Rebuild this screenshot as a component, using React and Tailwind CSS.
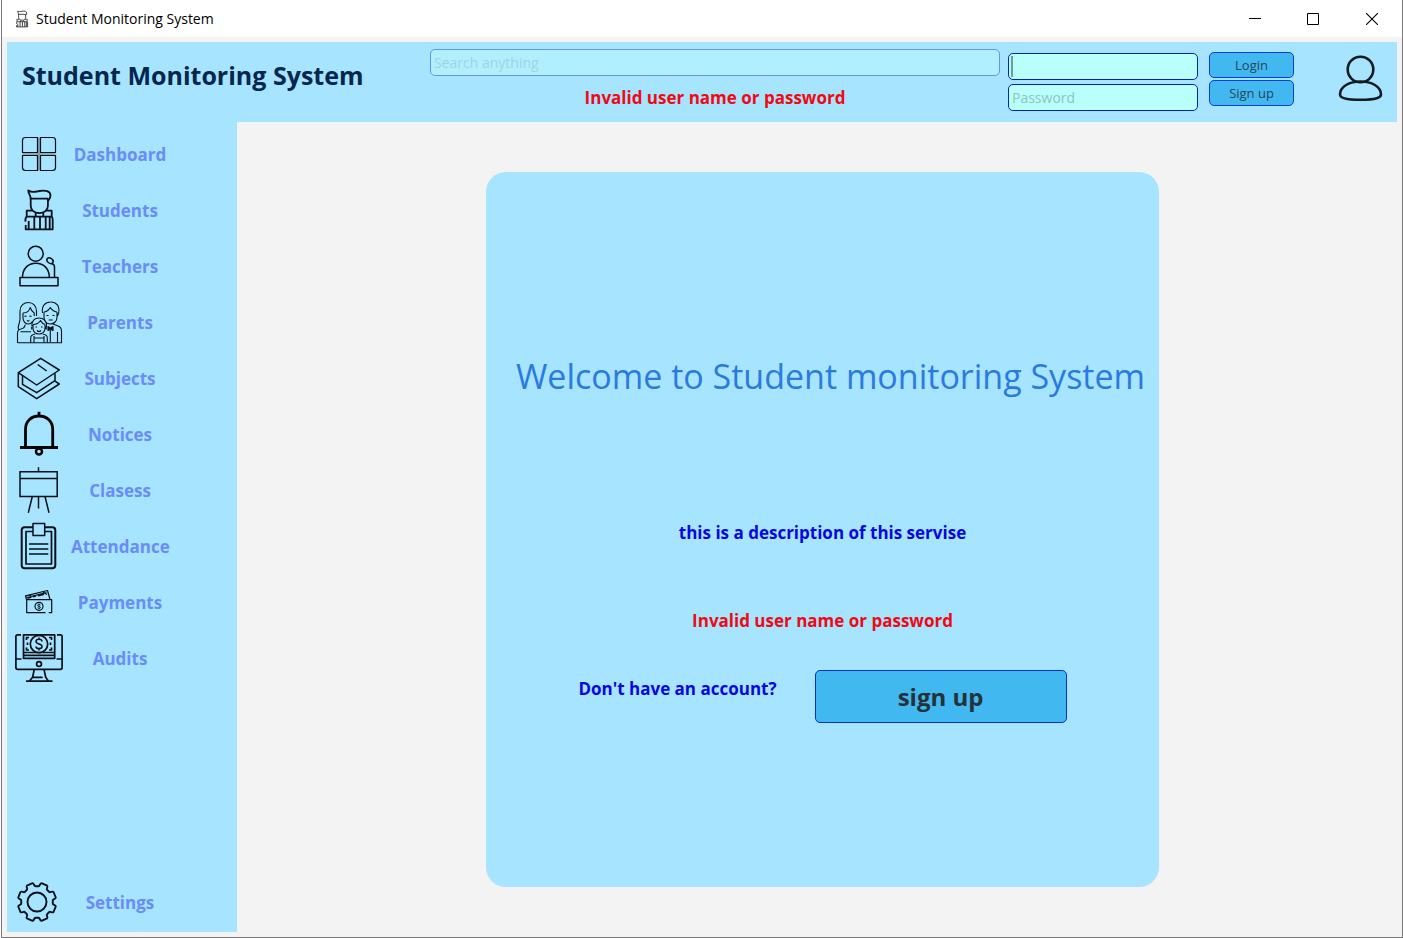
import React from "react";

const line = {
  width: 48,
  height: 48,
  viewBox: "0 0 48 48",
  fill: "none",
  stroke: "#06101a",
  strokeWidth: 1.5,
  strokeLinejoin: "round",
  "aria-hidden": true,
};

function StudentShape() {
  return (
    <>
      <path d="M15.700 13C16 9.500 13.200 8 13.300 4.500c3 2.500 7 1.200 11 .5 6-1 11.200 0 11.200 4.500 0 2-.8 3.500-2.300 5.500" />
      <path d="M15.700 12.600h17.200v7.500c0 4-3.600 7-8.600 7s-8.600-3-8.600-7z" />
      <path d="M17.500 24.700h-5.800v6h25v-6H31M20.700 27v3.700M28.300 27v3.700" />
      <path d="M11.700 30.700c-1.200 1-1.500 3-1.200 5M10.700 39v4.300h27V33.500c0-1.500-.4-2.300-1.200-2.800M13.700 35v8.300M19.300 31v12.300M25 31v12.300M30.700 31v12.300M34.700 31v12.300" />
    </>
  );
}

function DashboardIcon() {
  return (
    <svg {...line}>
      <path d="M24 7.500v33M7.500 24h33" stroke="#7d96a3" strokeWidth="1.600" />
      <path d="M22.500 7.500v15h-15V10.500q0-3 3-3zM25.500 7.500v15h15V10.500q0-3-3-3zM22.500 40.500v-15h-15v12q0 3 3 3zM25.500 40.500v-15h15v12q0 3-3 3z" strokeWidth="1.200" />
    </svg>
  );
}

function StudentsIcon() {
  return (
    <svg {...line} strokeWidth="1.800">
      <StudentShape />
    </svg>
  );
}

function TeachersIcon() {
  return (
    <svg {...line}>
      <circle cx="20.700" cy="11.700" r="7.500" />
      <path d="M7.500 35.300c0-8.500 5.500-14 13.400-14s13.400 5.500 13.400 14M5 35.500h38v8.200H5z" />
      <ellipse cx="35" cy="18.700" rx="3.400" ry="2.500" transform="rotate(35 35 18.700)" />
      <path d="M36.500 21.500c2 .5 3 1.500 3 3.500v10.500" />
    </svg>
  );
}

function ParentsIcon() {
  return (
    <svg {...line} strokeWidth="1.100">
      <path d="M4 32c-2.500-3 1-6 1-11v-8C5 7.500 9 4.500 13.500 4.500S21.500 8 21.500 13v5" />
      <path d="M8 15v5c0 3 2 6 5.200 6 2 0 3.300-1 4.200-2.500M8 15c4 0 6.500-2.500 7.200-5.500 1 3 2.500 4.500 4 5.500v3M4 31.500c3.500-.5 6-2 6.200-5" />
      <path d="M9.500 18.500q1-1 2 0M14.500 18.500q1-1 2 0M12 22.500q1 1 2.400 0" />
      <path d="M2.500 44.700V35c0-2 .5-3 2-3.500M5.500 33.700H16M2.500 44.700H46.500V33c0-3-1.500-4.500-4-5.200L38 26M42.500 34v10.700" />
      <path d="M27.500 15c-1-7 2.500-11 8-11 5.500-.5 9.500 4 8.200 11l-1.200 3M29 14c3-.5 5-2 6.300-4.500 1.500 2.500 3.500 4 6.700 4.500M29 14v5c0 4 2.500 7 6.300 7 4 0 6.700-3 6.700-7v-5" />
      <path d="M31.500 17.500h2M37.500 17.500h2M33.700 22h4" />
      <path d="M17 28c-.5-5 2.500-8 7-8s8 3 7.500 8l-1 3M18 26.500c3 0 6-1.500 7.500-4 1 2 2.500 3.500 4.700 4M18 27v3c0 3.500 2.500 6 6 6s6-2.500 6-6v-3M16.700 28.500v3M31.300 28.500v3" />
      <path d="M20.500 29h1.500M26 29h1.500M22 32.500q2 2 4 0M15.700 44.700v-5c0-2 2-3.200 4.500-3.700M32.300 44.700v-5c0-2-2-3.200-4.500-3.700M19 38v6.500M29 38v6.500M19 40h10" />
      <path d="M33 28.500l2.300 1.500 2.700-1.500v4L35.300 31 33 32.500zM35.300 32v12" fill="#06101a" />
    </svg>
  );
}

function SubjectsIcon() {
  return (
    <svg {...line}>
      <path d="M25.700 4.300L44.300 16 21.700 31 3.300 18.700zM22.700 10.500l9 6.500M3.300 18.700v14l18.400 12L44.300 30 40 27.200" />
      <path d="M7.500 21.500v8.800l14.200 8.400L40 26.700v-7.500" />
    </svg>
  );
}

function NoticesIcon() {
  return (
    <svg {...line} stroke="#000000" strokeWidth="2.800" strokeLinejoin="miter">
      <path d="M10.500 37.500V19.500C10.500 11.500 16 6 24 6s13.700 5.500 13.700 13.500v18M5 37.500h38M24 1.700V6" />
      <circle cx="24" cy="41.500" r="3" strokeWidth="2.500" />
    </svg>
  );
}

function ClassesIcon() {
  return (
    <svg {...line} strokeLinejoin="miter">
      <path d="M5 5.700h37.200v24.800H5zM5 12.500h37.200M23.500 1.300v4.400M17.300 30.500l-4 16.200M23.500 30.500v12M30 30.500l4 16.200" />
    </svg>
  );
}

function AttendanceIcon() {
  return (
    <svg {...line}>
      <rect x="6.700" y="5.300" width="33.600" height="41" rx="3" strokeWidth="2" />
      <rect x="11" y="9.500" width="25.500" height="32.500" strokeWidth="1.700" />
      <rect x="18" y="1.500" width="11.700" height="12" fill="#a6e4ff" />
      <path d="M14 22h19.300M14 27h19.300M14 32h19.300" strokeWidth="1.300" />
    </svg>
  );
}

function PaymentsIcon() {
  return (
    <svg {...line} strokeWidth="1.200">
      <path d="M30.500 34.700H11.700v-13h25v13h-3M11.500 21.500l-1-3.700 22-5.300 2.500 9" />
      <path d="M12.500 20.500l4-1.200M18 19l3-.8M23 17.800l6-1.500M14 17l2 1M11.500 19.500l20-4.800M28 14l4 2.500" />
      <circle cx="24" cy="28.300" r="4" />
      <path d="M25.500 27c-.5-1-3-.8-3 .4 0 1.400 3 .6 3 2 0 1.200-2.500 1.400-3 .3M24 25.500v5.600" strokeWidth=".8" />
    </svg>
  );
}

function AuditsIcon() {
  return (
    <svg {...line} strokeWidth="1.700">
      <path d="M6 .9H2.500Q.9.900.900 2.500v31q0 1.800 1.800 1.800h42.600q1.800 0 1.800-1.800v-31Q47.100.9 45.500.9H42M.9 25h5.600M41.500 25h5.600" />
      <path d="M8.500.9H39.700V24.300H8.500zM8.500 18.500h31.200M8.500 21.300h31.200" />
      <circle cx="24" cy="10" r="8.700" fill="#a6e4ff" />
      <path d="M11.500 6V3.500H14M36.500 6V3.500H34M11.500 13.500V16H14M36.500 13.500V16H34M12.500 8.500v2.500M35.500 8.500v2.500" />
      <path d="M27 7.500c0-1.400-1.200-2.200-3-2.200s-3 .8-3 2.200c0 3.200 6 1.600 6 4.900 0 1.400-1.200 2.200-3 2.200s-3-.8-3-2.200M24 3.500v2M24 14.500v2" strokeWidth="1.500" />
      <circle cx="24" cy="30" r="2.400" />
      <path d="M19.300 35.300l-1.700 8h10M29 35.300l1.700 8 2.500 3.500M17.600 43.300l-3 3.500M11 47.100h26.500" />
    </svg>
  );
}

function gearPath() {
  const at = (deg, r) => {
    const a = (deg * Math.PI) / 180;
    return `${(22 + r * Math.cos(a)).toFixed(2)} ${(24 + r * Math.sin(a)).toFixed(2)}`;
  };
  let d = "";
  for (let k = 0; k < 8; k += 1) {
    const c = 22.5 + 45 * k;
    d += `${k === 0 ? "M" : "L"}${at(c - 9, 19.3)}L${at(c + 9, 19.3)}`;
    d += `Q${at(c + 12, 19)} ${at(c + 13, 17.3)}Q${at(c + 14, 15.8)} ${at(c + 18, 15.8)}L${at(c + 27, 15.8)}Q${at(c + 31, 15.8)} ${at(c + 32, 17.3)}Q${at(c + 33, 19)} ${at(c + 36, 19.3)}`;
  }
  return `${d}Z`;
}

function SettingsIcon() {
  return (
    <svg {...line} strokeWidth="1.900">
      <path d={gearPath()} />
      <circle cx="22" cy="24" r="9.500" />
    </svg>
  );
}

const items = [
  ["Dashboard", DashboardIcon],
  ["Students", StudentsIcon],
  ["Teachers", TeachersIcon],
  ["Parents", ParentsIcon],
  ["Subjects", SubjectsIcon],
  ["Notices", NoticesIcon],
  ["Clasess", ClassesIcon],
  ["Attendance", AttendanceIcon],
  ["Payments", PaymentsIcon],
  ["Audits", AuditsIcon],
];

function NavItem({ label, Icon }) {
  return (
    <a href="#" className="flex h-14 items-center">
      <span className="flex w-16 shrink-0 justify-center">
        <Icon />
      </span>
      <span className="w-[98px] pt-0.5 text-center text-[17px] leading-6 font-bold whitespace-nowrap text-[#6a8cf8]">{label}</span>
    </a>
  );
}

function TitleBar() {
  return (
    <div className="flex h-[37px] items-center bg-white pl-3 text-black">
      <svg width="16" height="18" viewBox="8 2 32 44" fill="none" stroke="#333333" strokeWidth="2.200" aria-hidden="true">
        <StudentShape />
      </svg>
      <span className="ml-1.5 flex-1 text-sm">Student Monitoring System</span>
      <button type="button" aria-label="Minimize" className="flex h-9 w-[58px] items-center justify-center">
        <svg width="12" height="12" viewBox="0 0 12 12" stroke="#000000"><path d="M0 5.500h12" /></svg>
      </button>
      <button type="button" aria-label="Maximize" className="flex h-9 w-[58px] items-center justify-center">
        <svg width="12" height="12" viewBox="0 0 12 12" fill="none" stroke="#000000"><path d="M.5.5h11v11H.5z" /></svg>
      </button>
      <button type="button" aria-label="Close" className="flex h-9 w-[60px] items-center justify-center">
        <svg width="12" height="12" viewBox="0 0 12 12" stroke="#000000" strokeWidth="1.100"><path d="M0 0l12 12M12 0L0 12" /></svg>
      </button>
    </div>
  );
}

function Header() {
  return (
    <header className="flex h-20 bg-[#a6e4ff] pr-[14px]">
      <h1 className="w-[423px] shrink-0 pt-[17px] pl-[15px] text-[25px] leading-8 font-bold whitespace-nowrap text-[#04264f]">
        Student Monitoring System
      </h1>
      <div className="flex min-w-0 flex-1 flex-col pt-[7px]">
        <input
          type="search"
          aria-label="Search anything"
          placeholder="Search anything"
          className="h-[27px] w-full rounded-[5px] border border-[#6495ee] bg-[#b0effd] px-[3px] text-sm outline-none placeholder:text-[#a0d3e2]"
        />
        <p className="mt-[10px] text-center text-[17px] leading-6 font-bold text-[#ee0a14]">Invalid user name or password</p>
      </div>
      <form className="ml-2 flex shrink-0 gap-[11px]" onSubmit={(e) => e.preventDefault()}>
        <div className="flex w-[190px] flex-col gap-1 pt-[11px]">
          <div className="flex h-[27px] items-center rounded-[5px] border border-[#0a1fc0] bg-[#b9fffb] px-[2px]">
            <span className="h-[21px] w-0.5 bg-[#6a9ca4]" />
            <input type="text" aria-label="User name" className="h-full min-w-0 flex-1 bg-transparent text-sm outline-none" />
          </div>
          <input
            type="password"
            aria-label="Password"
            placeholder="Password"
            className="h-[27px] w-full rounded-[5px] border border-[#0a1fc0] bg-[#b9fffb] px-[3px] text-sm outline-none placeholder:text-[#90c4bf]"
          />
        </div>
        <div className="flex w-[85px] flex-col gap-0.5 pt-[10px] text-[13px] text-[#24465a]">
          <button type="submit" className="h-[26px] rounded-[5px] border border-[#0b3fdc] bg-[#42b8f0] pt-0.5">Login</button>
          <button type="button" className="h-[26px] rounded-[5px] border border-[#0b3fdc] bg-[#42b8f0] pt-0.5">Sign up</button>
        </div>
      </form>
      <button type="button" aria-label="Account" className="mt-[13px] ml-11 h-12 w-[45px] shrink-0">
        <svg width="45" height="48" viewBox="0 0 45 48" fill="none" stroke="#141c20" strokeWidth="2.600" aria-hidden="true">
          <circle cx="22.500" cy="14.500" r="12.800" />
          <path d="M22.500 26.500C11.500 26.500 2 31.500 2 39.500c0 3 4.500 5.300 20.500 5.300S43 42.500 43 39.500c0-8-9.500-13-20.500-13z" />
        </svg>
      </button>
    </header>
  );
}

export default function App() {
  return (
    <div className="flex min-h-screen flex-col bg-white pl-px font-['Open_Sans','Noto_Sans',sans-serif]">
      <div className="flex flex-1 flex-col border-x border-b border-[#7a7a7a] bg-[#f3f3f3]">
        <TitleBar />
        <div className="flex flex-1 flex-col p-[5px]">
          <Header />
          <div className="flex flex-1">
            <nav aria-label="Main" className="flex w-[230px] shrink-0 flex-col bg-[#a6e4ff] pt-1 pb-0.5">
              {items.map(([label, Icon]) => (
                <NavItem key={label} label={label} Icon={Icon} />
              ))}
              <div className="mt-auto">
                <NavItem label="Settings" Icon={SettingsIcon} />
              </div>
            </nav>
            <main className="flex min-w-0 flex-1 justify-center pt-[50px] pb-[45px] pl-[11px]">
              <section className="flex w-[673px] max-w-full flex-col items-center rounded-[20px] bg-[#a6e4ff] pt-[180px] pb-6">
                <h2 className="pl-4 text-center text-[34px] leading-[48px] font-normal text-[#2a7ae2]">
                  Welcome to Student monitoring System
                </h2>
                <p className="mt-[121px] text-[17px] leading-6 font-bold text-[#0707e0]">this is a description of this servise</p>
                <p className="mt-16 text-[17px] leading-6 font-bold text-[#ee0a14]">Invalid user name or password</p>
                <div className="mt-[37px] flex gap-[38px]">
                  <p className="text-[17px] leading-[38px] font-bold text-[#0707e0]">Don't have an account?</p>
                  <button type="button" className="h-[53px] w-[252px] rounded-[5px] border border-[#0b2fd0] bg-[#42b8f0] text-2xl font-bold text-[#24323a]">
                    sign up
                  </button>
                </div>
              </section>
            </main>
          </div>
        </div>
      </div>
    </div>
  );
}
